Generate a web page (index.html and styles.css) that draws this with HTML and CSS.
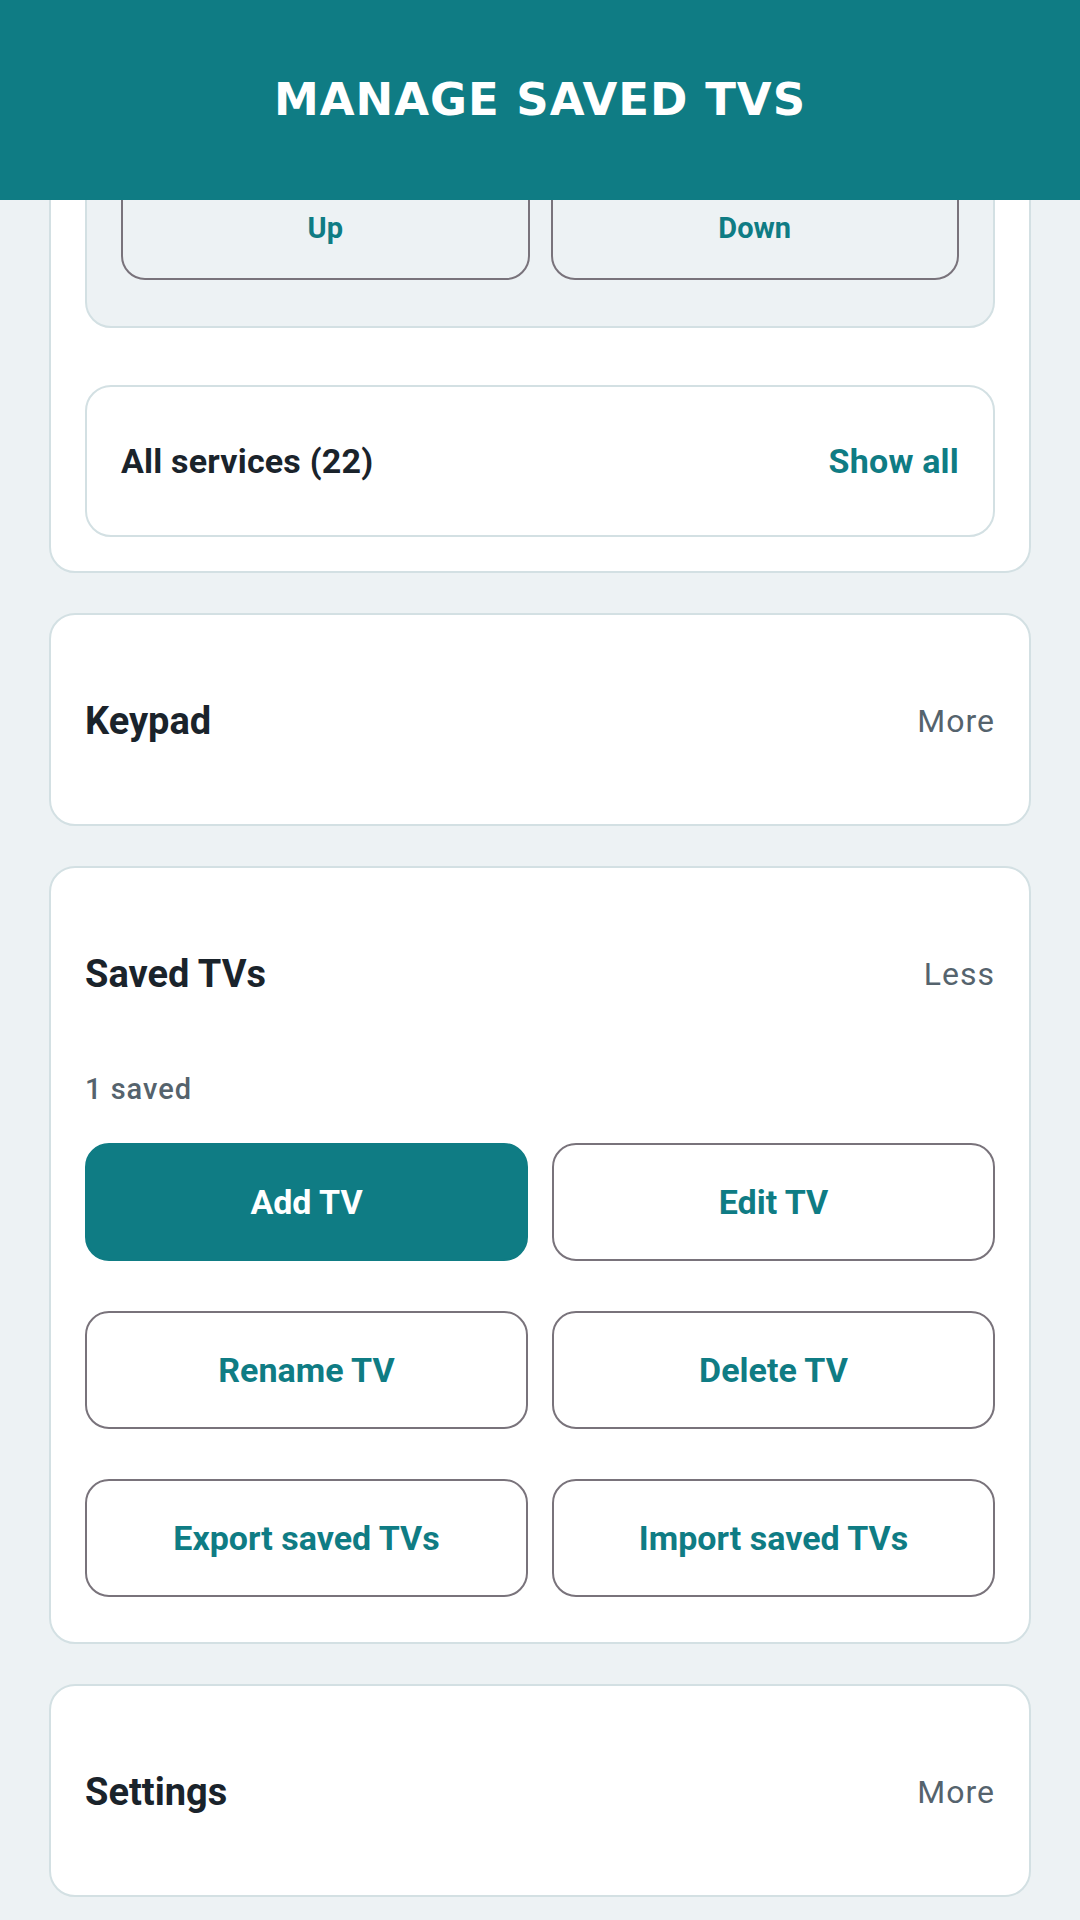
FILE: index.html
```html
<!DOCTYPE html>
<html lang="en">
<head>
<meta charset="utf-8">
<title>Manage saved TVs</title>
<link rel="stylesheet" href="styles.css">
</head>
<body>
<header class="appbar">
  <h1 class="appbar-title">MANAGE SAVED TVS</h1>
</header>
<main class="content">
  <section class="card card-nav">
    <div class="panel">
      <div class="pair">
        <button class="btn btn-ghost btn-small">Up</button>
        <button class="btn btn-ghost btn-small">Down</button>
      </div>
    </div>
    <div class="subcard">
      <span class="subcard-label">All services (22)</span>
      <span class="subcard-link">Show all</span>
    </div>
  </section>

  <section class="card">
    <div class="card-head">
      <h2 class="card-title">Keypad</h2>
      <span class="card-toggle">More</span>
    </div>
  </section>

  <section class="card">
    <div class="card-head">
      <h2 class="card-title">Saved TVs</h2>
      <span class="card-toggle">Less</span>
    </div>
    <p class="saved-count">1 saved</p>
    <div class="btn-grid">
      <button class="btn btn-primary">Add TV</button>
      <button class="btn btn-outline">Edit TV</button>
      <button class="btn btn-outline">Rename TV</button>
      <button class="btn btn-outline">Delete TV</button>
      <button class="btn btn-outline">Export saved TVs</button>
      <button class="btn btn-outline">Import saved TVs</button>
    </div>
  </section>

  <section class="card">
    <div class="card-head">
      <h2 class="card-title">Settings</h2>
      <span class="card-toggle">More</span>
    </div>
  </section>
</main>
</body>
</html>
```

FILE: styles.css
```css
* {
  box-sizing: border-box;
}

html, body {
  margin: 0;
  padding: 0;
  background: #edf2f4;
}

body {
  font-family: Roboto, "Noto Sans", "Liberation Sans", sans-serif;
  color: #1a232b;
}

.appbar {
  position: fixed;
  top: 0;
  left: 0;
  right: 0;
  height: 200px;
  background: #0f7c84;
  display: flex;
  align-items: center;
  justify-content: center;
  z-index: 10;
}

.appbar-title {
  margin: 0 0 2px;
  font-family: "DejaVu Sans", "Liberation Sans", sans-serif;
  font-weight: 700;
  font-size: 45px;
  letter-spacing: 1px;
  color: #ffffff;
}

.content {
  padding: 98px 49px 60px;
  display: flex;
  flex-direction: column;
  gap: 40px;
}

.card {
  background: #ffffff;
  border: 2px solid #d3e0e3;
  border-radius: 26px;
  padding: 44px 34px 41px;
}

.card-nav {
  padding: 34px 34px 34px;
  display: flex;
  flex-direction: column;
  gap: 57px;
}

.panel {
  background: #edf2f4;
  border: 2px solid #d3e0e3;
  border-radius: 26px;
  padding: 40px 34px 46px;
}

.pair {
  display: grid;
  grid-template-columns: 1fr 1fr;
  gap: 21px;
}

.subcard {
  height: 152px;
  border: 2px solid #d3e0e3;
  border-radius: 26px;
  padding: 0 34px;
  display: flex;
  align-items: center;
  justify-content: space-between;
}

.subcard-label {
  font-weight: 700;
  font-size: 34px;
  letter-spacing: 0.2px;
  color: #1a232b;
}

.subcard-link {
  font-weight: 700;
  font-size: 34px;
  letter-spacing: 0.2px;
  color: #0f7c84;
}

.card-head {
  height: 124px;
  display: flex;
  align-items: center;
  justify-content: space-between;
}

.card-title {
  margin: 0;
  font-weight: 700;
  font-size: 38px;
  color: #1a232b;
}

.card-toggle {
  font-weight: 400;
  font-size: 32px;
  letter-spacing: 1px;
  color: #55636d;
}

.saved-count {
  margin: 33px 0 0;
  height: 40px;
  line-height: 40px;
  font-size: 29px;
  font-weight: 500;
  letter-spacing: 1px;
  color: #55636d;
}

.btn-grid {
  margin: 34px 0 4px;
  display: grid;
  grid-template-columns: 1fr 1fr;
  column-gap: 24px;
  row-gap: 50px;
}

.btn {
  height: 118px;
  border-radius: 24px;
  font-family: Roboto, "Noto Sans", "Liberation Sans", sans-serif;
  font-weight: 700;
  font-size: 34px;
  color: #0f7c84;
  background: #ffffff;
  border: 2px solid #79737b;
  padding: 0;
}

.btn-primary {
  background: #0f7c84;
  border-color: #0f7c84;
  color: #ffffff;
}

.btn-ghost {
  background: #edf2f4;
}

.btn-small {
  height: 104px;
  font-size: 29px;
}
```
